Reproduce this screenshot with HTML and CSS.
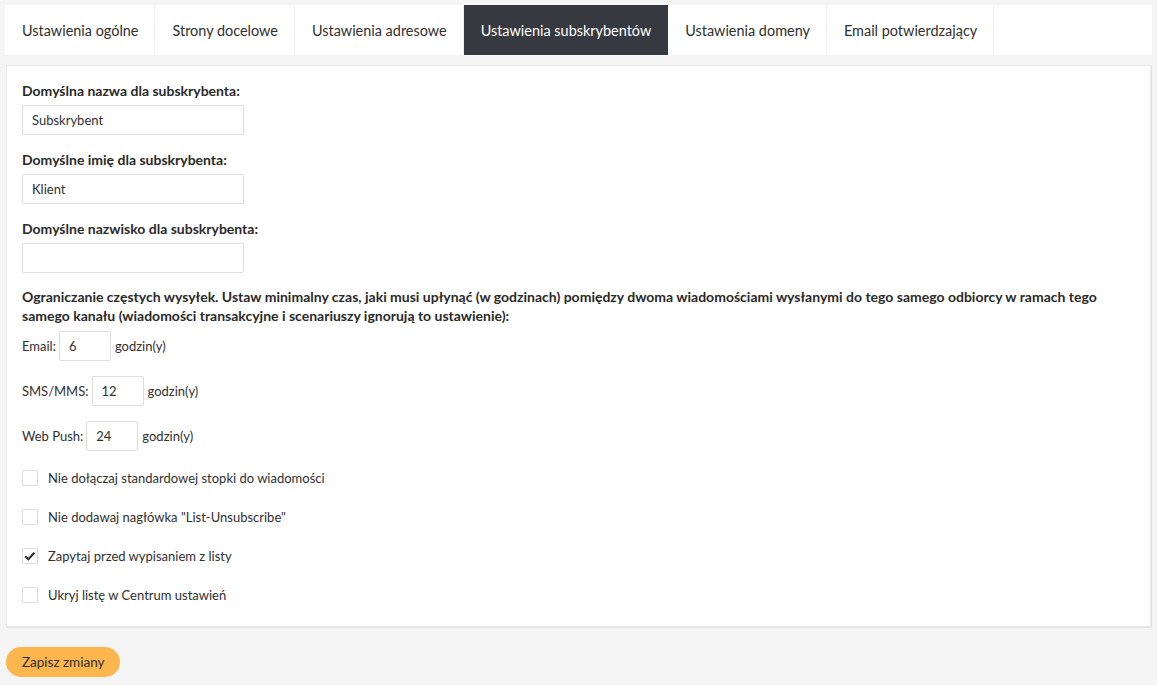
FILE: index.html
```html
<!DOCTYPE html>
<html lang="pl">
<head>
<meta charset="utf-8">
<title>Ustawienia subskrybentów</title>
<link rel="stylesheet" href="styles.css">
</head>
<body>
<nav class="tabs">
  <a class="tab">Ustawienia ogólne</a>
  <a class="tab">Strony docelowe</a>
  <a class="tab">Ustawienia adresowe</a>
  <a class="tab active">Ustawienia subskrybentów</a>
  <a class="tab">Ustawienia domeny</a>
  <a class="tab">Email potwierdzający</a>
</nav>
<section class="panel">
  <div class="field">
    <label class="label">Domyślna nazwa dla subskrybenta:</label>
    <input class="text-input" type="text" value="Subskrybent">
  </div>
  <div class="field">
    <label class="label">Domyślne imię dla subskrybenta:</label>
    <input class="text-input" type="text" value="Klient">
  </div>
  <div class="field">
    <label class="label">Domyślne nazwisko dla subskrybenta:</label>
    <input class="text-input" type="text" value="">
  </div>
  <div class="limits">
    <p class="label para">Ograniczanie częstych wysyłek. Ustaw minimalny czas, jaki musi upłynąć (w godzinach) pomiędzy dwoma wiadomościami wysłanymi do tego samego odbiorcy w ramach tego samego kanału (wiadomości transakcyjne i scenariuszy ignorują to ustawienie):</p>
    <div class="limit-row"><span>Email:</span><input class="num-input" type="text" value="6"><span class="unit">godzin(y)</span></div>
    <div class="limit-row"><span>SMS/MMS:</span><input class="num-input" type="text" value="12"><span class="unit">godzin(y)</span></div>
    <div class="limit-row"><span>Web Push:</span><input class="num-input" type="text" value="24"><span class="unit">godzin(y)</span></div>
  </div>
  <ul class="checks">
    <li class="check"><span class="box"></span><span>Nie dołączaj standardowej stopki do wiadomości</span></li>
    <li class="check"><span class="box"></span><span>Nie dodawaj nagłówka "List-Unsubscribe"</span></li>
    <li class="check"><span class="box"><svg viewBox="0 0 16 16" width="16" height="16"><path d="M3.2 8.3 L6.4 11.3 L12.4 4.6" fill="none" stroke="#2a2a2a" stroke-width="2.1"/></svg></span><span>Zapytaj przed wypisaniem z listy</span></li>
    <li class="check"><span class="box"></span><span>Ukryj listę w Centrum ustawień</span></li>
  </ul>
</section>
<div class="actions">
  <button class="save-btn" type="button">Zapisz zmiany</button>
</div>
</body>
</html>
```
FILE: styles.css
```css
* { box-sizing: border-box; }
html, body { margin: 0; }
body {
  background: #f5f5f5;
  font-family: "Lato", "Open Sans", sans-serif;
  font-size: 13px;
  color: #303030;
  padding: 5px 5px 0 5px;
}
.tabs {
  display: flex;
  background: #fff;
  height: 50px;
}
.tab {
  display: flex;
  align-items: center;
  padding: 0 16px 0 17px;
  font-size: 14.45px;
  color: #303030;
  border-right: 1px solid #efefef;
  cursor: pointer;
}
.tab.active {
  background: #363940;
  color: #fff;
  border-right-color: #363940;
}
.panel {
  background: #fff;
  margin: 10px 1px 0 1px;
  border: 1px solid #eaeaea;
  box-shadow: 1px 1px 0 #e2e2e2;
  padding: 15px 15px 12px 15px;
}
.field { margin-bottom: 15px; }
.label {
  display: block;
  font-weight: 700;
  font-size: 14px;
  line-height: 20px;
  margin: 0 0 4px 0;
  color: #2a2a2a;
}
.text-input {
  display: block;
  width: 222px;
  height: 30px;
  border: 1px solid #dedede;
  border-radius: 2px;
  padding: 0 9px;
  font-family: inherit;
  font-size: 13px;
  color: #303030;
  outline: none;
}
.para {
  line-height: 19px;
  margin: -1px 0 6px 0;
}
.limit-row {
  display: flex;
  align-items: center;
  gap: 3px;
  height: 30px;
  margin-bottom: 15px;
}
.limit-row:last-child { margin-bottom: 0; }
.unit { margin-left: 1px; }
.num-input {
  width: 52px;
  height: 30px;
  border: 1px solid #dedede;
  border-radius: 2px;
  padding: 0 9px;
  font-family: inherit;
  font-size: 13px;
  color: #303030;
  outline: none;
}
.checks {
  list-style: none;
  margin: 7px 0 0 0;
  padding: 0;
}
.check {
  display: flex;
  align-items: center;
  gap: 10px;
  height: 39px;
}
.box {
  width: 16px;
  height: 16px;
  border: 1px solid #dcdcdc;
  border-radius: 1px;
  display: flex;
  align-items: center;
  justify-content: center;
}
.box svg { display: block; flex: none; }
.actions { padding: 20px 0 0 1px; }
.save-btn {
  background: #fdb54e;
  border: none;
  border-radius: 15px;
  height: 30px;
  padding: 0 16px;
  font-family: inherit;
  font-size: 13.5px;
  color: #303030;
  cursor: pointer;
}
```
